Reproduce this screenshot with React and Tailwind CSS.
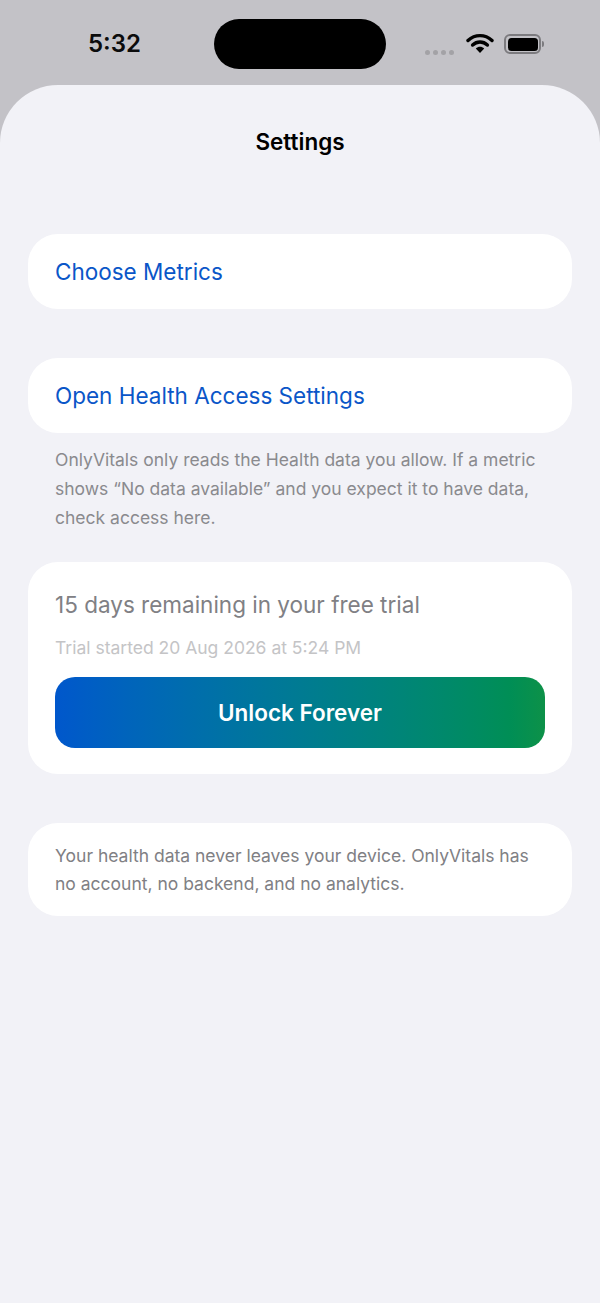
import React from 'react';

const font = { fontFamily: 'Inter, "Noto Sans", sans-serif' };

const StatusBar = () => (
    <div className="relative h-[85px] shrink-0 flex items-start">
        <div className="w-[229px] pt-[29px] flex justify-center">
            <span className="text-[24px] leading-[30px] font-semibold text-[#0b0b0c]">5:32</span>
        </div>
        <div className="absolute left-[214px] top-[19px] w-[172px] h-[50px] rounded-[25px] bg-black" />
        <div className="absolute left-[425px] top-[33px] flex items-center">
            <div className="flex gap-[3px] mt-[17px]">
                <span className="w-[5px] h-[5px] rounded-full bg-[#a3a2a6]" />
                <span className="w-[5px] h-[5px] rounded-full bg-[#a3a2a6]" />
                <span className="w-[5px] h-[5px] rounded-full bg-[#a3a2a6]" />
                <span className="w-[5px] h-[5px] rounded-full bg-[#a3a2a6]" />
            </div>
            <svg width="28" height="21" viewBox="0 0 28 21" className="ml-[12px] -mt-[1px]">
                <path d="M2 7.5C9 1 19 1 26 7.5" fill="none" stroke="black" strokeWidth="3.4" strokeLinecap="round" />
                <path d="M6.6 12C11 8 17 8 21.4 12" fill="none" stroke="black" strokeWidth="3.4" strokeLinecap="round" />
                <path d="M9.8 15.4C12.2 13.3 15.8 13.3 18.2 15.4L14 20Z" fill="black" />
            </svg>
            <div className="ml-[10px] flex items-center">
                <div className="w-[37px] h-[20px] rounded-[6px] border-2 border-[#7c7b7f] p-[1.5px]">
                    <div className="w-full h-full rounded-[3.5px] bg-black" />
                </div>
                <div className="w-[2px] h-[6px] rounded-r-full bg-[#7c7b7f] ml-[1px]" />
            </div>
        </div>
    </div>
);

const LinkCard = ({ label }) => (
    <div className="h-[75px] rounded-[30px] bg-white px-[27px] flex items-center">
        <span className="text-[22.5px] text-[#0a56c8]">{label}</span>
    </div>
);

export default function App() {
    return (
        <div className="w-[600px] h-[1303px] bg-[#c3c2c7] flex flex-col overflow-hidden" style={font}>
            <StatusBar />
            <div className="flex-1 bg-[#f2f2f7] rounded-t-[58px] px-[28px]">
                <h1 className="text-center text-[22.5px] leading-[30px] font-semibold text-black pt-[42px]">Settings</h1>
                <div className="mt-[77px]">
                    <LinkCard label="Choose Metrics" />
                </div>
                <div className="mt-[49px]">
                    <LinkCard label="Open Health Access Settings" />
                </div>
                <p className="mt-[12px] px-[27px] text-[17.5px] leading-[29px] text-[#8a8a8e]">
                    OnlyVitals only reads the Health data you allow. If a metric shows “No data available” and you expect it to have data, check access here.
                </p>
                <div className="mt-[30px] rounded-[30px] bg-white px-[27px] pt-[26px] pb-[26px]">
                    <p className="text-[22.5px] leading-[34px] text-[#808084]">15 days remaining in your free trial</p>
                    <p className="mt-[14px] text-[17.5px] leading-[24px] text-[#c4c4c6]">Trial started 20 Aug 2026 at 5:24 PM</p>
                    <button className="mt-[17px] w-full h-[71px] rounded-[20px] bg-gradient-to-r from-[#0057cc] to-[#0d9148] text-white text-[22.5px] font-semibold">
                        Unlock Forever
                    </button>
                </div>
                <div className="mt-[49px] rounded-[30px] bg-white px-[27px] pt-[19px] pb-[18px]">
                    <p className="text-[17.5px] leading-[28px] text-[#808084]">
                        Your health data never leaves your device. OnlyVitals has no account, no backend, and no analytics.
                    </p>
                </div>
            </div>
        </div>
    );
}
